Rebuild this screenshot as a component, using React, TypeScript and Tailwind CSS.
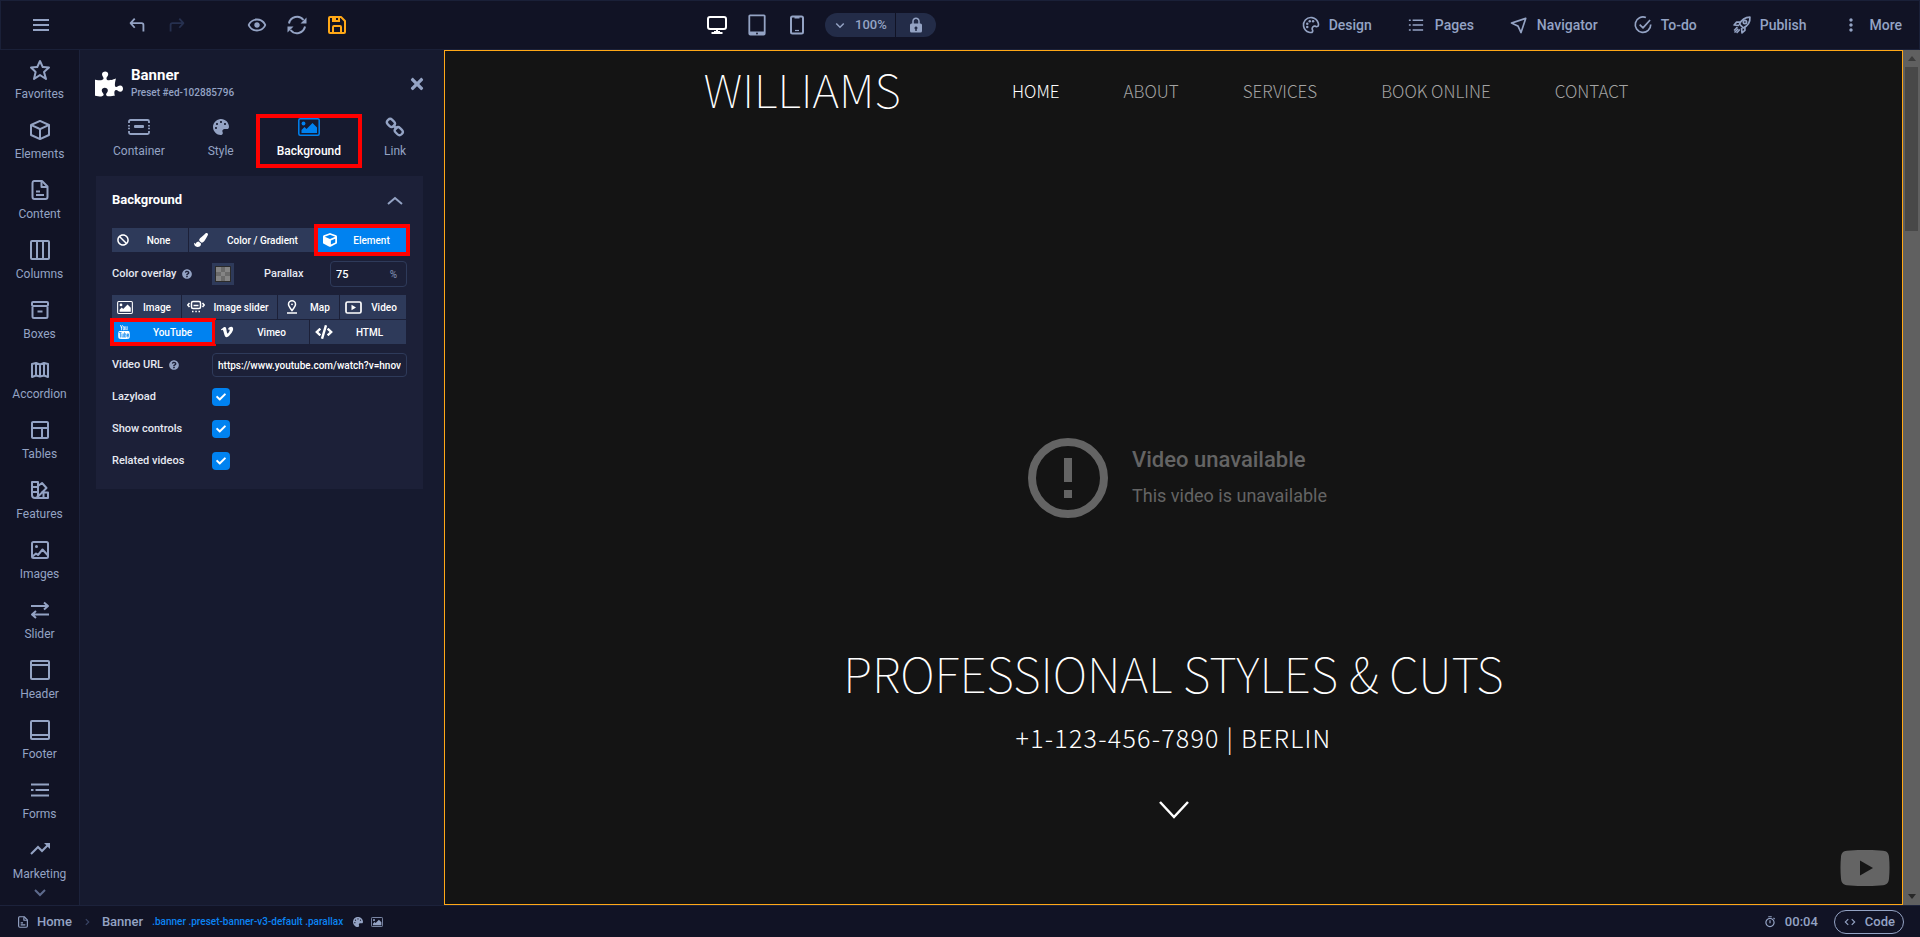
import { useState } from "react"
import type { ComponentType, ReactNode } from "react"
import {
  BiChevronDown,
  BiChevronRight,
  BiCode,
  BiCube,
  BiDotsVerticalRounded,
  BiLayout,
  BiMenu,
  BiNavigation,
  BiPalette,
  BiSave,
  BiShow,
  BiSolidLock,
  BiStar,
  BiStopwatch,
  BiTrendingUp,
} from "react-icons/bi"
import { FaBan, FaCheck, FaCode, FaCube, FaPaintBrush, FaPalette, FaPuzzlePiece, FaQuestionCircle, FaTimes, FaVimeoV } from "react-icons/fa"
import { TfiYoutube } from "react-icons/tfi"

type IconProps = { className?: string }
type Icon = ComponentType<IconProps>

function Stroke({ className, children, width = 2 }: IconProps & { children: ReactNode; width?: number }) {
  return (
    <svg viewBox="0 0 24 24" fill="none" stroke="currentColor" strokeWidth={width} strokeLinejoin="round" className={className}>
      {children}
    </svg>
  )
}

const UndoIcon = ({ className }: IconProps) => (
  <Stroke className={className}>
    <path d="M9.5 5L5 10l4.500 5M5.5 10H17a2 2 0 0 1 2 2v7" />
  </Stroke>
)

const SyncIcon = ({ className }: IconProps) => (
  <Stroke className={className}>
    <path d="M4 10.5a8.200 8.200 0 0 1 14.500-3.500M20 13.5a8.200 8.200 0 0 1-14.500 3.500" />
    <path d="M21.500 4.500v6h-6zM2.500 19.500v-6h6z" fill="currentColor" stroke="none" />
  </Stroke>
)

const DesktopIcon = ({ className }: IconProps) => (
  <Stroke className={className}>
    <rect x="3" y="4" width="18" height="12" rx="2" />
    <path d="M12 16v3.500M6.500 20h11M9 19h6" />
  </Stroke>
)

const TabletIcon = ({ className }: IconProps) => (
  <svg viewBox="0 0 18 22" className={className}>
    <path
      fill="currentColor"
      fillRule="evenodd"
      d="M2 .5h14a1.600 1.600 0 0 1 1.600 1.600v17.400a2 2 0 0 1-2 2H2.400a2 2 0 0 1-2-2V2.100A1.600 1.600 0 0 1 2 .5zM2.200 2.300v15.200h13.600V2.300zM9 18.600a.9.9 0 1 0 0 1.800.9.9 0 0 0 0-1.800z"
    />
  </svg>
)

const PhoneIcon = ({ className }: IconProps) => (
  <Stroke className={className}>
    <rect x="6" y="3.500" width="12" height="17" rx="1.500" />
    <path d="M9.500 4.500h5" />
    <path d="M10 17.500h4" strokeWidth="1.200" />
  </Stroke>
)

const PageIcon = ({ className }: IconProps) => (
  <Stroke className={className}>
    <path d="M14 3H6a2 2 0 0 0-1.500 2v14A2 2 0 0 0 6.500 21h11a2 2 0 0 0 2-2V8.500z" />
    <path d="M13.500 4v5H19M8 13.500h4M8 17h8" />
  </Stroke>
)

const ColumnsIcon = ({ className }: IconProps) => (
  <Stroke className={className}>
    <rect x="3" y="3" width="18" height="18" rx="1" />
    <path d="M9 3v18M15 3v18" />
  </Stroke>
)

const BoxIcon = ({ className }: IconProps) => (
  <Stroke className={className}>
    <path d="M4.500 9v9.500A1.500 1.500 0 0 0 6 20h12a1.500 1.500 0 0 0 1.500-1.500V9M9.500 13.500h5" />
    <rect x="4" y="4" width="16" height="4" rx="1" />
  </Stroke>
)

const AccordionIcon = ({ className }: IconProps) => (
  <Stroke className={className}>
    <path d="M4 6l4-1 4 1.500L16 5l4 1v13l-4-1.500-4 1-4-1-4 1.500zM8 5v13M12 6.500v12M16 5v13" />
  </Stroke>
)

const SwatchIcon = ({ className }: IconProps) => (
  <Stroke className={className}>
    <path d="M4 4h6v13a3 3 0 0 1-3 3 3 3 0 0 1-3-3zM4 9h6M4 14h6" />
    <path d="M10 8l4-3 4.500 5-9 9M13 14.500h7V20H7M15.500 14.500V20" />
  </Stroke>
)

const ImageIcon = ({ className }: IconProps) => (
  <Stroke className={className}>
    <rect x="4" y="4" width="16" height="16" rx="1.500" />
    <path d="M4.500 18.500l3.500-3 2 1.500 4.500-5.500 5.500 6" />
    <circle cx="8.500" cy="8.500" r="1.500" fill="currentColor" stroke="none" />
  </Stroke>
)

const SliderIcon = ({ className }: IconProps) => (
  <Stroke className={className}>
    <path d="M3 8h16.500M16 4.500L20 8l-4 3.500M21 16.500H4.500M8 13l-4 3.500L8 20" />
  </Stroke>
)

const HeaderIcon = ({ className }: IconProps) => (
  <Stroke className={className}>
    <rect x="3" y="3" width="18" height="18" rx="1" />
    <path d="M3 7h18" />
  </Stroke>
)

const FooterIcon = ({ className }: IconProps) => (
  <Stroke className={className}>
    <rect x="3" y="3" width="18" height="18" rx="1" />
    <path d="M3 17h18" />
  </Stroke>
)

const FormIcon = ({ className }: IconProps) => (
  <Stroke className={className}>
    <path d="M3 6.500h18M3 12h2.500M7.500 12H21M3 17.500h18" />
  </Stroke>
)

const ListIcon = ({ className }: IconProps) => (
  <Stroke className={className}>
    <path d="M7.500 5.500h14M7.500 12h14M7.500 18.500h14M2.500 5.500H5M2.500 12H5M2.500 18.500H5" />
  </Stroke>
)

const TodoIcon = ({ className }: IconProps) => (
  <Stroke className={className}>
    <path d="M15.500 3A9.300 9.300 0 1 0 21.300 11.500M8 11.500l4 4 8.500-9.500" />
  </Stroke>
)

const RocketIcon = ({ className }: IconProps) => (
  <Stroke className={className}>
    <path d="M21.500 2.500c-6 0-10 3-12.500 8.500l4.500 4.500c5.500-2.500 8.500-7 8-13zM10 8.500H5.500L2.500 12l6 .5M15.500 14v4.500L12 21.500l-.5-6" />
    <circle cx="15.500" cy="8.500" r="2" />
    <path d="M6.500 14.500l-4 4M9.500 17.500l-4 4M7.500 16.500L3 21" strokeWidth="1.800" />
  </Stroke>
)

const ContainerIcon = ({ className }: IconProps) => (
  <svg viewBox="0 0 22 16" fill="none" stroke="currentColor" strokeWidth="1.800" className={className}>
    <path d="M1 4V2.500A1.500 1.500 0 0 1 2.500 1h17A1.500 1.500 0 0 1 21 2.500V4M1 12v1.500A1.500 1.500 0 0 0 2.500 15h17a1.500 1.500 0 0 0 1.500-1.500V12M1 6v1.500M1 8.800v1.500M21 6v1.500M21 8.800v1.500" />
    <rect x="6" y="6" width="10" height="3" rx="1" fill="currentColor" stroke="none" />
  </svg>
)

const ChainIcon = ({ className }: IconProps) => (
  <Stroke className={className} width={2.8}>
    <rect x="-5" y="-3.500" width="10" height="7.500" rx="3.500" transform="translate(7.300 7) rotate(45)" />
    <rect x="-5" y="-3.500" width="10" height="7.500" rx="3.500" transform="translate(16.700 16.800) rotate(45)" />
    <path d="M9.500 9.500l5 5" />
  </Stroke>
)

const PictureIcon = ({ className }: IconProps) => (
  <svg viewBox="0 0 22 18" className={className}>
    <rect x="0.800" y="0.800" width="20.400" height="16.400" rx="1.500" fill="none" stroke="currentColor" strokeWidth="1.500" />
    <circle cx="5.500" cy="5.500" r="1.900" fill="currentColor" />
    <path d="M3.500 15v-3l3-3 2 2 6-6 4.500 4.500V15z" fill="currentColor" />
  </svg>
)

const SlidesIcon = ({ className }: IconProps) => (
  <svg viewBox="0 0 18 14" fill="none" stroke="currentColor" strokeWidth="1.500" className={className}>
    <rect x="4.500" y="1.500" width="9" height="7" rx="1.500" />
    <path d="M6.500 5.500h5M2.500 3L.8 5l1.700 2M15.500 3l1.700 2-1.700 2M5 11.500h1.500M8.300 11.500h1.500M11.500 11.500H13" />
  </svg>
)

const PinIcon = ({ className }: IconProps) => (
  <svg viewBox="0 0 12 14" fill="none" stroke="currentColor" strokeWidth="1.500" className={className}>
    <path d="M6 10.500C4 8 2.500 6.300 2.500 4.300a3.500 3.500 0 0 1 7 0C9.500 6.300 8 8 6 10.500zM1 13h10" />
    <circle cx="6" cy="4.300" r="0.900" fill="currentColor" stroke="none" />
  </svg>
)

const PlayBoxIcon = ({ className }: IconProps) => (
  <svg viewBox="0 0 17 13" className={className}>
    <rect x="1" y="1" width="15" height="11" rx="1.500" fill="none" stroke="currentColor" strokeWidth="1.700" />
    <path d="M6.500 3.800v5.400l4.500-2.700z" fill="currentColor" />
  </svg>
)

const SIDEBAR: { label: string; icon: Icon }[] = [
  { label: "Favorites", icon: BiStar },
  { label: "Elements", icon: BiCube },
  { label: "Content", icon: PageIcon },
  { label: "Columns", icon: ColumnsIcon },
  { label: "Boxes", icon: BoxIcon },
  { label: "Accordion", icon: AccordionIcon },
  { label: "Tables", icon: BiLayout },
  { label: "Features", icon: SwatchIcon },
  { label: "Images", icon: ImageIcon },
  { label: "Slider", icon: SliderIcon },
  { label: "Header", icon: HeaderIcon },
  { label: "Footer", icon: FooterIcon },
  { label: "Forms", icon: FormIcon },
  { label: "Marketing", icon: BiTrendingUp },
]

const MENU: { label: string; icon: Icon; size: string }[] = [
  { label: "Design", icon: BiPalette, size: "size-5" },
  { label: "Pages", icon: ListIcon, size: "mr-0.5 size-[18px]" },
  { label: "Navigator", icon: BiNavigation, size: "size-5" },
  { label: "To-do", icon: TodoIcon, size: "size-5" },
  { label: "Publish", icon: RocketIcon, size: "size-5" },
  { label: "More", icon: BiDotsVerticalRounded, size: "size-5" },
]

const TABS: { label: string; icon: Icon; size: string }[] = [
  { label: "Container", icon: ContainerIcon, size: "h-4 w-[22px]" },
  { label: "Style", icon: FaPalette, size: "size-4" },
  { label: "Background", icon: PictureIcon, size: "h-[18px] w-[22px]" },
  { label: "Link", icon: ChainIcon, size: "size-5" },
]

function ToolButton({ label, icon: Icon, className = "", size = "size-6" }: { label: string; icon: Icon; className?: string; size?: string }) {
  return (
    <button aria-label={label} className={`flex h-full w-10 items-center justify-center ${className}`}>
      <Icon className={size} />
    </button>
  )
}

function TopBar() {
  return (
    <header className="flex h-[50px] shrink-0 items-center border border-[#1a2038] bg-[#111325] text-[#94a3c4]">
      <button aria-label="Menu" className="flex w-20 justify-center">
        <BiMenu className="size-6" />
      </button>
      <div className="ml-9 flex h-full">
        <ToolButton label="Undo" icon={UndoIcon} size="size-[22px]" />
        <ToolButton label="Redo" icon={UndoIcon} size="size-[22px] -scale-x-100" className="text-[#26304f]" />
      </div>
      <div className="ml-10 flex h-full">
        <ToolButton label="Preview" icon={BiShow} size="size-[22px]" />
        <ToolButton label="Refresh" icon={SyncIcon} />
        <ToolButton label="Save" icon={BiSave} className="text-[#ffa817]" />
      </div>
      <div className="ml-[340px] flex h-full">
        <ToolButton label="Desktop" icon={DesktopIcon} className="text-white" />
        <ToolButton label="Tablet" icon={TabletIcon} size="h-[22px] w-[18px]" />
        <ToolButton label="Phone" icon={PhoneIcon} />
      </div>
      <div className="ml-2 flex h-6 items-stretch rounded-full bg-[#232c48] text-[13px] font-medium">
        <button className="flex w-[71px] items-center gap-1.5 border-r border-[#111325] pl-1.5">
          <BiChevronDown className="size-[18px]" />
          <span>100%</span>
        </button>
        <button aria-label="Lock zoom" className="flex w-10 items-center justify-center">
          <BiSolidLock className="size-[18px]" />
        </button>
      </div>
      <nav className="ml-auto flex gap-[35px] pr-[17px] text-sm font-medium">
        {MENU.map(({ label, icon: Icon, size }) => (
          <button key={label} className="flex items-center gap-2">
            <Icon className={size} />
            {label}
          </button>
        ))}
      </nav>
    </header>
  )
}

function Sidebar() {
  return (
    <aside className="flex w-20 shrink-0 flex-col overflow-hidden border-r border-[#1c223b] bg-[#111325] text-[#94a3c4]">
      {SIDEBAR.map(({ label, icon: Icon }) => (
        <button key={label} className="flex h-[60px] shrink-0 flex-col items-center gap-1 pt-2 text-xs leading-4">
          <Icon className="size-6" />
          {label}
        </button>
      ))}
      <button aria-label="More elements" className="-mt-2.5 flex justify-center text-[#5d6a8c]">
        <BiChevronDown className="size-6" />
      </button>
    </aside>
  )
}

function OptionButton({ label, icon: Icon, size = "size-3.5", className = "bg-[#2e3a5a]" }: { label: string; icon: Icon; size?: string; className?: string }) {
  return (
    <button className={`flex h-6 items-center pl-[5px] text-[10px] font-medium text-white ${className}`}>
      <Icon className={`shrink-0 ${size}`} />
      <span className="flex-1 text-center">{label}</span>
    </button>
  )
}

function CheckRow({ id, label }: { id: string; label: string }) {
  const [checked, setChecked] = useState(true)
  return (
    <div className="flex h-8 items-center">
      <label htmlFor={id} className="w-[100px]">
        {label}
      </label>
      <span className="relative flex">
        <input
          id={id}
          type="checkbox"
          checked={checked}
          onChange={(e) => setChecked(e.target.checked)}
          className="size-[18px] appearance-none rounded-sm bg-[#2e3a5a] checked:bg-[#0082f0]"
        />
        {checked && <FaCheck className="pointer-events-none absolute inset-1 size-2.5 text-white" />}
      </span>
    </div>
  )
}

function Panel() {
  return (
    <section className="w-[364px] shrink-0 bg-[#161a2f] pt-4 text-[#94a3c4]">
      <div className="flex items-center pr-[18px] pl-[15px]">
        <FaPuzzlePiece className="size-7 text-white" />
        <div className="ml-2">
          <h1 className="text-[15px] leading-[18px] font-bold text-white">Banner</h1>
          <p className="text-[10px] leading-[18px] font-medium">Preset #ed-102885796</p>
        </div>
        <button aria-label="Close" className="ml-auto">
          <FaTimes className="size-[18px]" />
        </button>
      </div>
      <div className="mt-3 flex gap-px pl-3">
        {TABS.map(({ label, icon: Icon, size }) => (
          <button
            key={label}
            className={`flex h-[54px] flex-col items-center justify-between border-4 px-[17px] pb-[5px] text-xs ${
              label === "Background" ? "border-[#ff0000] font-medium text-white" : "border-transparent"
            }`}
          >
            <span className={`flex h-[18px] items-center ${label === "Background" ? "text-[#0082f0]" : ""}`}>
              <Icon className={size} />
            </span>
            {label}
          </button>
        ))}
      </div>
      <div className="mr-[21px] ml-4 mt-2 bg-[#1c2038] px-4 py-3 text-[11px] font-medium text-[#e6e9f2]">
        <div className="flex h-6 items-center justify-between">
          <h2 className="text-[13px] font-bold text-white">Background</h2>
          <button aria-label="Collapse" className="mr-1 text-[#94a3c4]">
            <svg viewBox="0 0 16 9" fill="none" stroke="currentColor" strokeWidth="2" className="h-[9px] w-4">
              <path d="M1 8l7-6 7 6" />
            </svg>
          </button>
        </div>
        <div className="mt-4 mr-px flex gap-px">
          <OptionButton label="None" icon={FaBan} size="size-3" className="w-[76px] bg-[#2e3a5a]" />
          <OptionButton label="Color / Gradient" icon={FaPaintBrush} className="flex-1 bg-[#2e3a5a]" />
          <OptionButton label="Element" icon={FaCube} className="w-[88px] bg-[#0082f0] outline-4 outline-[#ff0000]" />
        </div>
        <div className="mt-[9px] flex h-[26px] items-center">
          <span className="flex w-[100px] items-center gap-1.5">
            Color overlay
            <FaQuestionCircle className="size-2.5 text-[#94a3c4]" />
          </span>
          <button aria-label="Overlay color" className="flex size-[22px] items-center justify-center bg-[#2e3a5a]">
            <span className="grid size-4 grid-cols-3 border border-[#2b2b2b] bg-[#6b6b6b]">
              <span className="bg-[#858585]" />
              <span />
              <span className="bg-[#858585]" />
              <span />
              <span className="bg-[#858585]" />
              <span />
              <span className="bg-[#858585]" />
              <span />
              <span className="bg-[#858585]" />
            </span>
          </button>
          <label htmlFor="parallax" className="ml-[30px]">
            Parallax
          </label>
          <span className="relative ml-auto flex">
            <input id="parallax" defaultValue="75" className="h-[26px] w-[77px] rounded-sm border border-[#2e3a5a] px-[5px] text-[11px] text-white" />
            <span className="absolute inset-y-0 right-2.5 flex items-center text-[10px] text-[#7683a4]">%</span>
          </span>
        </div>
        <div className="mt-2 mr-px flex gap-px">
          <OptionButton label="Image" icon={PictureIcon} size="h-[13px] w-4" className="w-[69px] bg-[#2e3a5a]" />
          <OptionButton label="Image slider" icon={SlidesIcon} size="h-3.5 w-[18px]" className="flex-1 bg-[#2e3a5a]" />
          <OptionButton label="Map" icon={PinIcon} size="h-3.5 w-[18px]" className="w-[61px] bg-[#2e3a5a]" />
          <OptionButton label="Video" icon={PlayBoxIcon} size="h-[13px] w-[17px]" className="w-[66px] bg-[#2e3a5a]" />
        </div>
        <div className="mt-px mr-px flex gap-px">
          <OptionButton label="YouTube" icon={TfiYoutube} className="w-[102px] bg-[#0082f0] outline-4 -outline-offset-2 outline-[#ff0000]" />
          <OptionButton label="Vimeo" icon={FaVimeoV} className="flex-1 bg-[#2e3a5a]" />
          <OptionButton label="HTML" icon={FaCode} size="h-3.5 w-[18px]" className="w-[96px] bg-[#2e3a5a]" />
        </div>
        <div className="mt-[9px] mb-1 flex items-center">
          <label htmlFor="video-url" className="flex w-[100px] items-center gap-1.5">
            Video URL
            <FaQuestionCircle className="size-2.5 text-[#94a3c4]" />
          </label>
          <input
            id="video-url"
            defaultValue="https://www.youtube.com/watch?v=hnov"
            className="h-6 min-w-0 flex-1 rounded-sm border border-[#2e3a5a] px-[5px] text-[10px] text-white"
          />
        </div>
        <CheckRow id="lazyload" label="Lazyload" />
        <CheckRow id="controls" label="Show controls" />
        <CheckRow id="related" label="Related videos" />
      </div>
    </section>
  )
}

function VideoBackground() {
  return (
    <div className="absolute inset-0 flex items-center justify-center gap-6 pl-2 font-[Roboto,sans-serif] font-normal text-[#646464]">
      <svg viewBox="0 0 80 80" className="size-20" fill="currentColor">
        <circle cx="40" cy="40" r="36" fill="none" stroke="currentColor" strokeWidth="8" />
        <path d="M36 20h8v24h-8zM36 52h8v8h-8z" />
      </svg>
      <div>
        <p className="text-[22px] leading-8 font-medium">Video unavailable</p>
        <p className="pt-1 text-[18px] leading-8">This video is unavailable</p>
      </div>
      <svg viewBox="0 0 50 36" className="absolute right-3 bottom-[18px] h-9 w-[50px]">
        <path fill="#646464" d="M7 .8C18-.3 32-.3 43 .8c4 .4 5.500 2 6 6 .7 7 .7 15 0 22-.5 4-2 6-6 6.400-11 1.100-25 1.100-36 0-4-.4-5.500-2.400-6-6.400-.7-7-.7-15 0-22 .5-4 2-5.600 6-6z" />
        <path fill="#141414" d="M20 10.500v15L33 18z" />
      </svg>
    </div>
  )
}

function Canvas() {
  return (
    <main className="relative flex min-w-0 flex-1 flex-col border border-[#ffa817] bg-[#141414] font-['Noto_Sans_CJK_JP','Noto_Sans',sans-serif] font-thin text-white">
      <VideoBackground />
      <div className="relative mx-auto flex w-full max-w-[940px] items-center justify-between pt-1 pr-[15px]">
        <a href="#" className="text-[46px] leading-[66px]">
          WILLIAMS
        </a>
        <nav className="flex gap-16 pt-1.5 text-[17px] leading-6 font-light text-[#a3a3a3]">
          <a href="#home" className="text-white">
            HOME
          </a>
          <a href="#about">ABOUT</a>
          <a href="#services">SERVICES</a>
          <a href="#book">BOOK ONLINE</a>
          <a href="#contact">CONTACT</a>
        </nav>
      </div>
      <div className="relative mt-auto flex flex-col items-center pb-[85px]">
        <h1 className="text-[48px] leading-[64px]">PROFESSIONAL STYLES &amp; CUTS</h1>
        <p className="mt-[13px] text-[25px] leading-10 font-light tracking-wider">+1-123-456-7890 | BERLIN</p>
        <button aria-label="Scroll down" className="mt-11">
          <svg viewBox="0 0 30 18" fill="none" stroke="currentColor" strokeWidth="2.500" className="h-[18px] w-[30px]">
            <path d="M1 1l14 15L29 1" />
          </svg>
        </button>
      </div>
    </main>
  )
}

function Scrollbar() {
  return (
    <div className="flex w-[17px] shrink-0 flex-col items-center bg-[#606060]">
      <svg viewBox="0 0 8 5" className="my-1.5 h-[5px] w-2 fill-[#3c3c3c]">
        <path d="M4 0l4 5H0z" />
      </svg>
      <div className="h-[164px] w-[13px] bg-[#484848]" />
      <svg viewBox="0 0 8 5" className="mt-auto mb-1.5 h-[5px] w-2 fill-[#282828]">
        <path d="M4 5L0 0h8z" />
      </svg>
    </div>
  )
}

function StatusBar() {
  return (
    <footer className="flex h-8 shrink-0 items-center border-t border-[#1c223b] bg-[#111325] px-4 text-[13px] font-medium text-[#94a3c4]">
      <PageIcon className="size-3.5" />
      <span className="ml-[7px]">Home</span>
      <BiChevronRight className="mx-2 size-3.5 text-[#3a4566]" />
      <span>Banner</span>
      <span className="ml-[9px] text-[10px] text-[#0b84f3]">.banner .preset-banner-v3-default .parallax</span>
      <FaPalette className="ml-2.5 size-2.5" />
      <PictureIcon className="ml-2 h-2.5 w-3" />
      <BiStopwatch className="ml-auto size-3.5" />
      <span className="ml-2">00:04</span>
      <button className="ml-4 flex h-6 items-center gap-2 rounded-full border border-[#94a3c4] px-2">
        <BiCode className="size-3.5" />
        Code
      </button>
    </footer>
  )
}

export default function App() {
  return (
    <div className="flex h-screen flex-col overflow-hidden bg-[#111325] font-[Roboto,sans-serif]">
      <TopBar />
      <div className="flex min-h-0 flex-1">
        <Sidebar />
        <Panel />
        <Canvas />
        <Scrollbar />
      </div>
      <StatusBar />
    </div>
  )
}
